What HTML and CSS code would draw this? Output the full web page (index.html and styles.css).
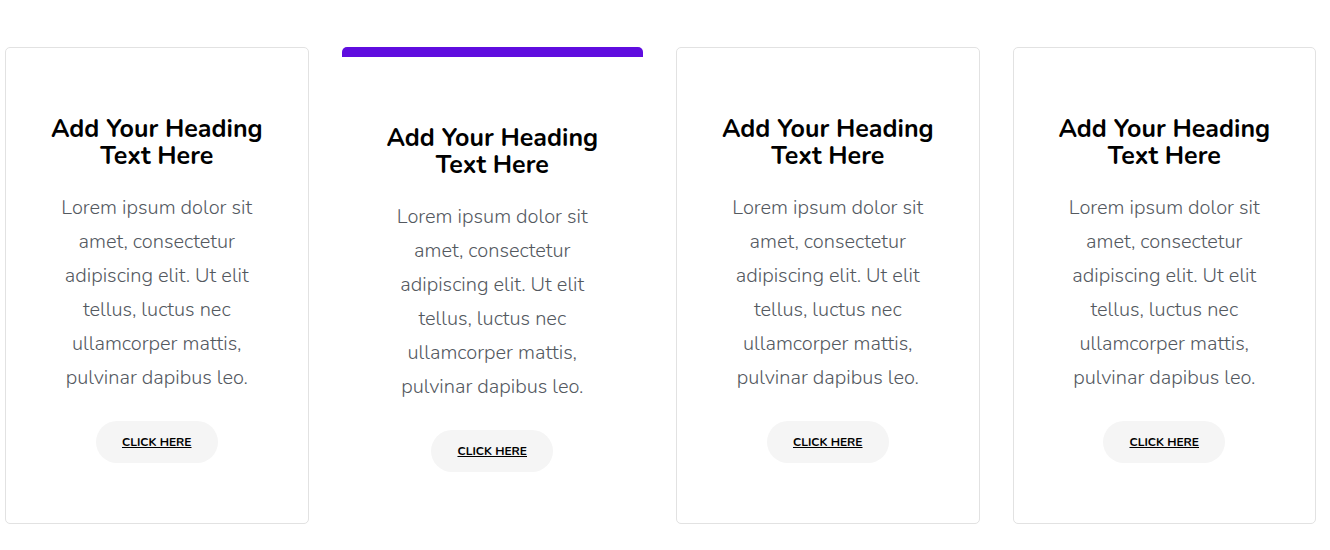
FILE: index.html
```html
<html>
<head>
  <title>Pricing Boxes</title>
  <link rel="stylesheet" href="styles.css">
</head>
<body>
  <div class="boxes">
    <div class="box">
      <h2>Add Your Heading Text Here</h2>
      <p>Lorem ipsum dolor sit amet, consectetur adipiscing elit. Ut elit tellus, luctus nec ullamcorper mattis, pulvinar dapibus leo.</p>
      <a class="btn" href="#">CLICK HERE</a>
    </div>
    <div class="box featured">
      <h2>Add Your Heading Text Here</h2>
      <p>Lorem ipsum dolor sit amet, consectetur adipiscing elit. Ut elit tellus, luctus nec ullamcorper mattis, pulvinar dapibus leo.</p>
      <a class="btn" href="#">CLICK HERE</a>
    </div>
    <div class="box">
      <h2>Add Your Heading Text Here</h2>
      <p>Lorem ipsum dolor sit amet, consectetur adipiscing elit. Ut elit tellus, luctus nec ullamcorper mattis, pulvinar dapibus leo.</p>
      <a class="btn" href="#">CLICK HERE</a>
    </div>
    <div class="box">
      <h2>Add Your Heading Text Here</h2>
      <p>Lorem ipsum dolor sit amet, consectetur adipiscing elit. Ut elit tellus, luctus nec ullamcorper mattis, pulvinar dapibus leo.</p>
      <a class="btn" href="#">CLICK HERE</a>
    </div>
  </div>
</body>
</html>
```

FILE: styles.css
```css
body {
  margin: 0;
  font-family: "Nunito", Lato, "Noto Sans", sans-serif;
  background-color: #ffffff;
}

.boxes {
  display: flex;
  gap: 33px;
  padding: 47px 14px 0 5px;
}

.box {
  flex: 1;
  display: flex;
  flex-direction: column;
  align-items: center;
  text-align: center;
  border: 1px solid #e2e2e2;
  border-radius: 5px;
  padding: 68px 30px 60px;
  height: 477px;
  box-sizing: border-box;
}

.box.featured {
  border: none;
  border-top: 10px solid #5f0ddf;
}

.box h2 {
  margin: 0;
  font-size: 25px;
  line-height: 27px;
  font-weight: 700;
  color: #000000;
  max-width: 230px;
}

.box p {
  margin: 21px 0 26px;
  font-size: 20px;
  line-height: 34px;
  font-weight: 300;
  color: #54595f;
  max-width: 222px;
}

.btn {
  display: inline-block;
  background-color: #f5f5f5;
  color: #000000;
  font-size: 12px;
  font-weight: 700;
  padding: 13px 26px;
  border-radius: 22px;
  text-decoration: underline;
}
```
